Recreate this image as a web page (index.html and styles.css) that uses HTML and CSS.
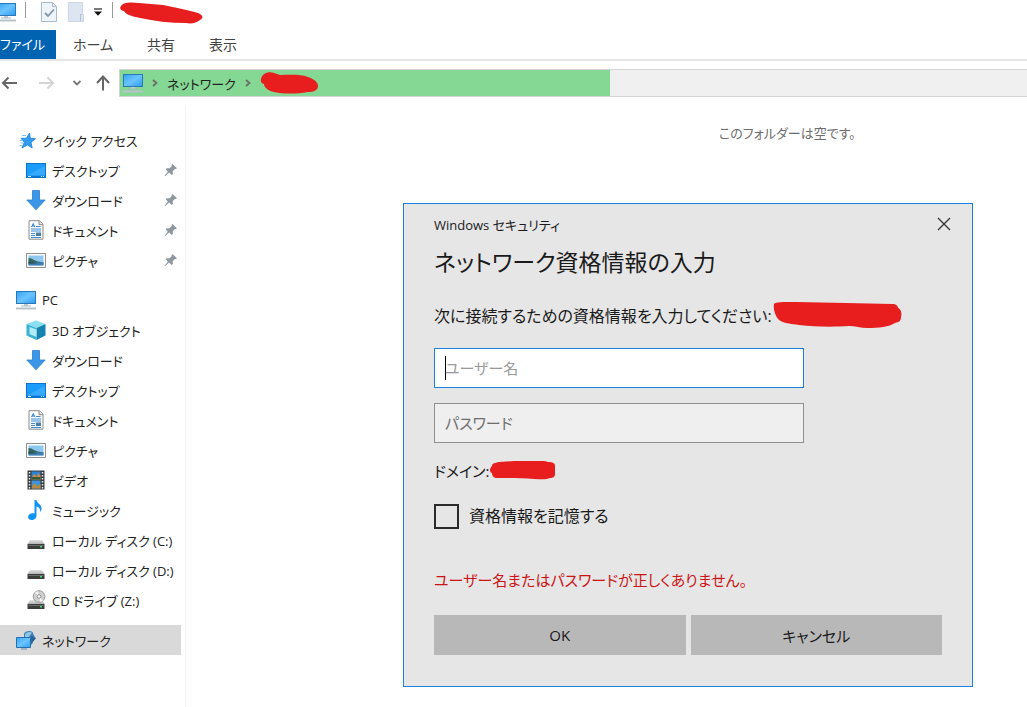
FILE: index.html
```html
<!DOCTYPE html>
<html lang="ja">

<head>
  <meta charset="UTF-8">
  <meta name="viewport" content="width=device-width, initial-scale=1.0">
  <title>ネットワーク</title>
  <link rel="stylesheet" href="styles.css">
</head>

<body>
  <!-- アイコン定義 -->
  <svg class="defs" aria-hidden="true">
    <defs>
      <linearGradient id="screen" x1="0" y1="0" x2="1" y2="1">
        <stop offset="0" stop-color="#35a5f5" />
        <stop offset="0.5" stop-color="#6cc4ff" />
        <stop offset="1" stop-color="#2f9df0" />
      </linearGradient>
      <linearGradient id="metal" x1="0" y1="0" x2="0" y2="1">
        <stop offset="0" stop-color="#e2e2e2" />
        <stop offset="1" stop-color="#b4b4b4" />
      </linearGradient>
      <symbol id="i-pc" viewBox="0 0 20 20">
        <path d="M0 1h20v13H0z" fill="#2a78b8" />
        <path d="M1 2h18v11H1z" fill="url(#screen)" />
        <path d="M8 14h4v2H8z" fill="#c3ccd3" />
        <path d="M5 15.500h10v1H5z" fill="#a9b4bc" />
        <path d="M0 17.500h20v2H0z" fill="#b9c3ca" />
      </symbol>
      <symbol id="i-star" viewBox="0 0 20 20">
        <path d="M13.500 3l.8 5.200 5.200.6-4.500 3.400 1.200 5.800-4.700-3-5.500 3 2.300-5.700L5 8.300l5.500-.1z" fill="#2f9cf0" stroke="#1b7fd4" stroke-width=".8" />
        <path d="M6 5.500h4M3.500 10.500h3M4.500 13h3M3.500 15.500h3" stroke="#7cc4f8" stroke-width="1" />
      </symbol>
      <symbol id="i-desktop" viewBox="0 0 20 20">
        <path d="M0 3h20v15H0z" fill="#0c74cc" />
        <path d="M1 4h18v11.500H1z" fill="#1a9cfc" />
        <path d="M1 15.500L19 6v9.500z" fill="#38aafd" />
        <path d="M2 16.500h3M15 16.500h1M17 16.500h1" stroke="#d6efff" stroke-width="1" />
      </symbol>
      <symbol id="i-down" viewBox="0 0 20 20">
        <path d="M6.500.5h7V10h5.700L10 19.700.8 10h5.700z" fill="#3a96e6" stroke="#2a7fcc" stroke-width=".8" />
      </symbol>
      <symbol id="i-doc" viewBox="0 0 20 20">
        <path d="M3 .7h10.500L17 4.200v15H3z" fill="#fafafa" stroke="#8c8c8c" stroke-width="1" />
        <path d="M13 .7v4h4" fill="#e4e4e4" stroke="#8c8c8c" stroke-width="1" />
        <path d="M5.500 7L7.300 3.500 8.500 7M6 6h2.500" fill="none" stroke="#2a7fcf" stroke-width="1" />
        <path d="M10 6.500h4.500M5 9h10M5 11h10M5 13.500h4M5 15.500h4M5 17.500h10" stroke="#3b8fd8" stroke-width="1" />
        <path d="M10 12.500h5v3.500h-5z" fill="#4a7da8" />
      </symbol>
      <symbol id="i-pic" viewBox="0 0 20 20">
        <path d="M.5 3.500h19v14H.5z" fill="#fdfdfd" stroke="#8f8f8f" />
        <path d="M2.500 5.500h15v10h-15z" fill="#8cc8f0" />
        <path d="M2.500 8c4 0 6 3.500 15 4.500v1h-15z" fill="#35655a" />
        <path d="M2.500 12.500h15v3h-15z" fill="#3f7fb4" />
        <path d="M2.500 12c4 0 5 1 9 1.500H2.500z" fill="#28463c" />
      </symbol>
      <symbol id="i-cube" viewBox="0 0 20 20">
        <path d="M10 .5l9.500 3.500-9 4L.5 4z" fill="#8be0f0" />
        <path d="M.5 4l10 4v12L.5 15.500z" fill="#35b4d4" />
        <path d="M19.500 4l-9 4v12l9-4.500z" fill="#1583b0" />
        <path d="M3.500 7l7 2.500v7.500l-7-3z" fill="#b4ecf6" />
      </symbol>
      <symbol id="i-video" viewBox="0 0 20 20">
        <path d="M1.500.5h17v19h-17z" fill="#3a3a3a" />
        <path d="M5.500 1.500h9v8h-9z" fill="#2d84d4" />
        <path d="M5.500 10.500h9v8h-9z" fill="#3d94de" />
        <path d="M6 7l2.500-3L11 7l1-4 2.500 3v3.500h-9z" fill="#d88b3b" />
        <path d="M5.500 7h9v2.500h-9z" fill="#355c34" />
        <path d="M6 16l3-3 2 3 3.500-2v4.500H6z" fill="#b58a44" />
        <path d="M3.500 2v17M16.500 2v17" stroke="#ececec" stroke-width="1.500" stroke-dasharray="1.500 1.500" />
      </symbol>
      <symbol id="i-music" viewBox="0 0 20 20">
        <path d="M8.500 0h2c.3 3.500 5.500 4.500 5 9-.1 1.300-.8 2.500-1.700 3.200 1-3.200-.8-5-3.300-5.700v9.200c0 2.500-2.300 4.300-4.800 4.300-2 0-3.600-1.200-3.600-3 0-2.300 2.800-4.200 6.400-3.500z" fill="#0f93f5" />
      </symbol>
      <symbol id="i-drive" viewBox="0 0 20 20">
        <path d="M4 10h12l2.500 4h-17z" fill="url(#metal)" />
        <path d="M1.500 14h17v5h-17z" fill="#3c3c3c" />
        <path d="M2.500 15h15v1h-15z" fill="#6b6b6b" />
        <path d="M14 16h2v1.500h-2z" fill="#3fdc6a" />
      </symbol>
      <symbol id="i-cd" viewBox="0 0 20 20">
        <path d="M4 10h12l2.500 4h-17z" fill="url(#metal)" />
        <circle cx="13" cy="6.500" r="5.800" fill="#d0d0d0" stroke="#9a9a9a" />
        <path d="M13 6.500L9 2.500a5.500 5.500 0 0 1 3-1.300zM13 6.500l4 4a5.500 5.500 0 0 1-3 1.300z" fill="#f4f4f4" />
        <circle cx="13" cy="6.500" r="1.800" fill="#fff" stroke="#8c8c8c" />
        <path d="M1.500 14h17v5h-17z" fill="#3c3c3c" />
        <path d="M2.500 15h15v1h-15z" fill="#6b6b6b" />
        <path d="M14 16h2v1.500h-2z" fill="#3fdc6a" />
      </symbol>
      <symbol id="i-net" viewBox="0 0 20 20">
        <path d="M8 3.500C10 .8 14 .3 16.500 2L18 5.500l2 3-2.500 2-1.500 4H8z" fill="#3d7fb4" />
        <path d="M9 4c2-2.500 5-2.500 7-1.500-1 2-2 2.500-3 4.500h-4z" fill="#8fc3e6" />
        <path d="M15 6l4.500 2.500-4 5z" fill="#2a5f8f" />
        <path d="M.5 7.500h14v10H.5z" fill="url(#screen)" stroke="#2470ae" />
        <path d="M5 19h6" stroke="#93a5b3" stroke-width="1.500" />
      </symbol>
      <symbol id="i-pin" viewBox="0 0 14 14">
        <path d="M8.500 1l4.500 4.300-1.300.8-.8-.2-2.200 2.400.2 2.700-1.200.9-2.600-2.500L1 13.300l-.4-.5L3.900 8.700 1.700 6.300l1-1.100 2.900.1 2.200-2.200-.3-1.200z" fill="#8e979e" />
      </symbol>
      <symbol id="i-chev" viewBox="0 0 6 10">
        <path d="M1 2l3.500 3L1 8" fill="none" stroke="#6a6f6a" stroke-width="1.800" />
      </symbol>
    </defs>
  </svg>

  <div class="explorer">
    <header class="titlebar">
      <svg class="icon title-pc"><use href="#i-pc" /></svg>
      <span class="sep"></span>
      <button class="quick" type="button" aria-label="プロパティ">
        <svg width="16" height="20" viewBox="0 0 16 20">
          <path d="M.5.5h11l4 4v15H.5z" fill="#eef4fa" stroke="#a9bccd" />
          <path d="M11.500.5v4h4" fill="none" stroke="#a9bccd" />
          <path d="M4 11l3 3 6-6.500" fill="none" stroke="#8096ac" stroke-width="1.800" />
        </svg>
      </button>
      <button class="quick" type="button" aria-label="新しいフォルダー">
        <svg width="16" height="20" viewBox="0 0 16 20">
          <path d="M.5.5h14v11l1 1v7H.5z" fill="#dde5f0" stroke="#ccd7e5" />
          <path d="M12.500 19v-6.500h2" fill="none" stroke="#b4c2d4" />
        </svg>
      </button>
      <button class="quick more" type="button" aria-label="カスタマイズ">
        <svg width="10" height="8" viewBox="0 0 10 8">
          <path d="M1 1h8" stroke="#222" stroke-width="1.200" />
          <path d="M1 3.500h8L5 7.800z" fill="#111" />
        </svg>
      </button>
      <span class="sep"></span>
      <svg class="mark" width="88" height="24" viewBox="0 0 88 24">
        <path d="M4 6C6 2 14 2 22 3l24 2c13 3 26 5 35 8 5 2 6 5 2 7-4 3-8 4-14 3-16 0-32-2-46-5-8-2-14-3-16-7-3 0-5-3-3-5z" />
      </svg>
    </header>

    <nav class="tabs">
      <button class="tab file" type="button">ファイル</button>
      <button class="tab" type="button">ホーム</button>
      <button class="tab" type="button">共有</button>
      <button class="tab" type="button">表示</button>
    </nav>

    <div class="navbar">
      <button class="arrow" type="button" aria-label="戻る">
        <svg width="18" height="16" viewBox="0 0 18 16"><path d="M17 8H3M8.500 2.500L3 8l5.500 5.500" fill="none" stroke="#666" stroke-width="2" /></svg>
      </button>
      <button class="arrow forward" type="button" aria-label="進む">
        <svg width="18" height="16" viewBox="0 0 18 16"><path d="M1 8h14M9.500 2.500L15 8l-5.500 5.500" fill="none" stroke="#d4d4d4" stroke-width="2" /></svg>
      </button>
      <button class="arrow recent" type="button" aria-label="最近表示した場所">
        <svg width="10" height="8" viewBox="0 0 10 8"><path d="M1.500 2L5 5.500 8.500 2" fill="none" stroke="#777" stroke-width="1.800" /></svg>
      </button>
      <button class="arrow up" type="button" aria-label="上へ">
        <svg width="16" height="18" viewBox="0 0 16 18"><path d="M8 16.500V3M2 9l6-6.500L14 9" fill="none" stroke="#666" stroke-width="2" /></svg>
      </button>
      <div class="address">
        <svg class="icon"><use href="#i-pc" /></svg>
        <svg class="chev"><use href="#i-chev" /></svg>
        <a href="#">ネットワーク</a>
        <svg class="chev"><use href="#i-chev" /></svg>
        <svg class="mark" width="60" height="24" viewBox="0 0 60 24">
          <path d="M1 8C2 3 8 0 14 2l6 2c10 0 20-1 28 2 6 2 10 5 10 9s-4 6-10 6c-12 2-24 2-34 0-6-1-10-5-10-8-2 0-4-3-3-5z" />
        </svg>
      </div>
    </div>

    <div class="body">
      <aside class="sidebar">
        <div class="group">
          <a class="item root" href="#"><svg class="icon"><use href="#i-star" /></svg>クイック アクセス</a>
          <a class="item" href="#"><svg class="icon"><use href="#i-desktop" /></svg>デスクトップ<svg class="pin"><use href="#i-pin" /></svg></a>
          <a class="item" href="#"><svg class="icon"><use href="#i-down" /></svg>ダウンロード<svg class="pin"><use href="#i-pin" /></svg></a>
          <a class="item" href="#"><svg class="icon"><use href="#i-doc" /></svg>ドキュメント<svg class="pin"><use href="#i-pin" /></svg></a>
          <a class="item" href="#"><svg class="icon"><use href="#i-pic" /></svg>ピクチャ<svg class="pin"><use href="#i-pin" /></svg></a>
        </div>
        <div class="group">
          <a class="item root" href="#"><svg class="icon"><use href="#i-pc" /></svg>PC</a>
          <a class="item" href="#"><svg class="icon"><use href="#i-cube" /></svg>3D オブジェクト</a>
          <a class="item" href="#"><svg class="icon"><use href="#i-down" /></svg>ダウンロード</a>
          <a class="item" href="#"><svg class="icon"><use href="#i-desktop" /></svg>デスクトップ</a>
          <a class="item" href="#"><svg class="icon"><use href="#i-doc" /></svg>ドキュメント</a>
          <a class="item" href="#"><svg class="icon"><use href="#i-pic" /></svg>ピクチャ</a>
          <a class="item" href="#"><svg class="icon"><use href="#i-video" /></svg>ビデオ</a>
          <a class="item" href="#"><svg class="icon"><use href="#i-music" /></svg>ミュージック</a>
          <a class="item" href="#"><svg class="icon"><use href="#i-drive" /></svg>ローカル ディスク (C:)</a>
          <a class="item" href="#"><svg class="icon"><use href="#i-drive" /></svg>ローカル ディスク (D:)</a>
          <a class="item" href="#"><svg class="icon"><use href="#i-cd" /></svg>CD ドライブ (Z:)</a>
        </div>
        <div class="group">
          <a class="item root selected" href="#"><svg class="icon"><use href="#i-net" /></svg>ネットワーク</a>
        </div>
      </aside>
      <main class="view">
        <p class="empty">このフォルダーは空です。</p>
      </main>
    </div>
  </div>

  <!-- 資格情報ダイアログ -->
  <form class="dialog" role="dialog" aria-labelledby="dialogTitle">
    <div class="dialog-bar">
      <span>Windows セキュリティ</span>
      <button class="close" type="button" aria-label="閉じる">
        <svg width="14" height="14" viewBox="0 0 14 14"><path d="M1 1l12 12M13 1L1 13" stroke="#333" stroke-width="1.300" /></svg>
      </button>
    </div>
    <h1 id="dialogTitle">ネットワーク資格情報の入力</h1>
    <p class="line">次に接続するための資格情報を入力してください:
      <svg class="mark" width="130" height="28" viewBox="0 0 130 28">
        <path d="M2 3C4 1 10 1 24 1l50 1 46 1c4 0 6 2 6 4 3 1 4 5 3 9 0 4-2 5-6 6-6 4-16 5-28 5-6 0-12-2-18-2-14 1-34 1-50-1-8-1-16-2-20-5-4-4-6-12-5-16z" />
      </svg>
    </p>
    <input class="field focused" type="text" placeholder="ユーザー名" aria-label="ユーザー名">
    <input class="field" type="password" placeholder="パスワード" aria-label="パスワード">
    <p class="line domain">ドメイン:
      <svg class="mark" width="67" height="19" viewBox="0 0 67 19">
        <path d="M1 9c0-2 1-3 2-4 0-3 3-3 7-4l15-1h30c2 0 3 1 4 1 5 0 7 1 7 4v8c0 3-2 4-5 4-4 2-10 1-16 1-12-1-26-1-37-1-3 0-5-2-5-5-1 0-2-1-2-3z" />
      </svg>
    </p>
    <label class="remember"><input type="checkbox">資格情報を記憶する</label>
    <p class="line error">ユーザー名またはパスワードが正しくありません。</p>
    <div class="buttons">
      <button type="submit">OK</button>
      <button type="button">キャンセル</button>
    </div>
  </form>
</body>

</html>
```

FILE: styles.css
```css
* {
  box-sizing: border-box;
}

body {
  margin: 0;
  background: #fff;
  color: #222;
  font-family: "Open Sans", "Noto Sans CJK JP", sans-serif;
  font-size: 13px;
  font-feature-settings: "palt";
  overflow: hidden;
}

button,
input {
  font: inherit;
  font-feature-settings: inherit;
  color: inherit;
}

button {
  border: none;
  padding: 0;
  background: none;
}

a {
  color: inherit;
  text-decoration: none;
}

p,
h1 {
  margin: 0;
  font-weight: normal;
}

.defs {
  position: absolute;
  width: 0;
  height: 0;
}

.icon {
  width: 20px;
  height: 20px;
  flex: none;
}

.mark {
  flex: none;
  fill: #e81e1e;
}

.explorer {
  display: flex;
  flex-direction: column;
  min-height: 100vh;
}

/* タイトルバー */
.titlebar {
  display: flex;
  align-items: center;
  height: 30px;
  padding-bottom: 6px;
}

.title-pc {
  margin-left: -4px;
}

.sep {
  width: 1px;
  height: 16px;
  margin: 0 4px 4px 9px;
  background: #999;
}

.quick {
  display: flex;
  margin-left: 11px;
}

.quick.more {
  margin-left: 9px;
}

/* リボン */
.tabs {
  display: flex;
  height: 31px;
  border-bottom: 2px solid #e6e6e6;
}

.tab {
  padding: 0 17px 2px;
  color: #444;
  font-size: 14px;
  white-space: nowrap;
}

.tab.file {
  width: 56px;
  padding: 0 12px 2px 0;
  background: #0063b1;
  color: #fff;
  font-size: 13px;
}

/* アドレスバー */
.navbar {
  display: flex;
  align-items: center;
  height: 44px;
}

.arrow {
  display: flex;
}

.arrow.forward {
  margin-left: 20px;
}

.arrow.recent {
  margin-left: 16px;
}

.arrow.up {
  margin: 0 8px 0 13px;
}

.address {
  flex: 1;
  display: flex;
  align-items: center;
  height: 28px;
  padding-left: 3px;
  border: 1px solid #d4d4d4;
  border-right: none;
  background: linear-gradient(to right, #84d893 54%, #f0f0f0 54%);
}

.address .chev {
  width: 6px;
  height: 10px;
  margin: 0 9px;
}

/* ナビゲーション ウィンドウ */
.body {
  flex: 1;
  display: flex;
}

.sidebar {
  flex: none;
  width: 186px;
  padding: 20px 4px 0 0;
  border-right: 1px solid #f4f4f4;
}

.group {
  margin-bottom: 10px;
}

.item {
  display: flex;
  align-items: center;
  gap: 6px;
  height: 30px;
  padding-left: 26px;
  white-space: nowrap;
}

.item.root {
  padding-left: 16px;
}

.item.selected {
  background: #d9d9d9;
}

.pin {
  width: 14px;
  height: 14px;
  margin: 0 3px 0 auto;
}

.view {
  flex: 1;
  padding: 18px 0 0 533px;
}

.empty {
  color: #6d6d6d;
  line-height: 20px;
  white-space: nowrap;
}

/* ダイアログ */
.dialog {
  position: absolute;
  top: 203px;
  left: 403px;
  width: 570px;
  padding: 0 30px 31px;
  border: 1px solid #1a82dc;
  background: #e6e6e6;
  color: #1a1a1a;
  font-size: 15px;
}

.dialog-bar {
  display: flex;
  align-items: center;
  justify-content: space-between;
  height: 40px;
  font-size: 13px;
}

.close {
  display: flex;
  padding: 6px;
  margin-right: -15px;
}

.dialog h1 {
  font-size: 23px;
  line-height: 36px;
}

.line {
  display: flex;
  align-items: center;
  height: 28px;
  white-space: nowrap;
}

h1 + .line {
  margin: 21px 0 19px;
  font-size: 16px;
}

.field {
  display: block;
  width: 370px;
  height: 40px;
  margin-bottom: 15px;
  padding: 0 10px;
  border: 1px solid #8f8f8f;
  border-radius: 0;
  outline: none;
  background: #efefef;
}

.field::placeholder {
  color: #6e6e6e;
}

.field.focused {
  border-color: #1a82dc;
  background: linear-gradient(#000, #000) 10px center / 1px 24px no-repeat #fff;
}

.field.focused::placeholder {
  color: #9a9a9a;
}

.domain {
  margin: -2px 0 20px;
}

.remember {
  display: flex;
  gap: 10px;
  font-size: 16px;
  line-height: 24px;
}

.remember input {
  appearance: none;
  width: 25px;
  height: 25px;
  margin: 0;
  border: 2px solid #2b2b2b;
}

.error {
  margin: 36px 0 22px;
  color: #cc1414;
}

.buttons {
  display: grid;
  grid-template-columns: 1fr 1fr;
  gap: 5px;
}

.buttons button {
  height: 40px;
  background: #b8b8b8;
}
```
